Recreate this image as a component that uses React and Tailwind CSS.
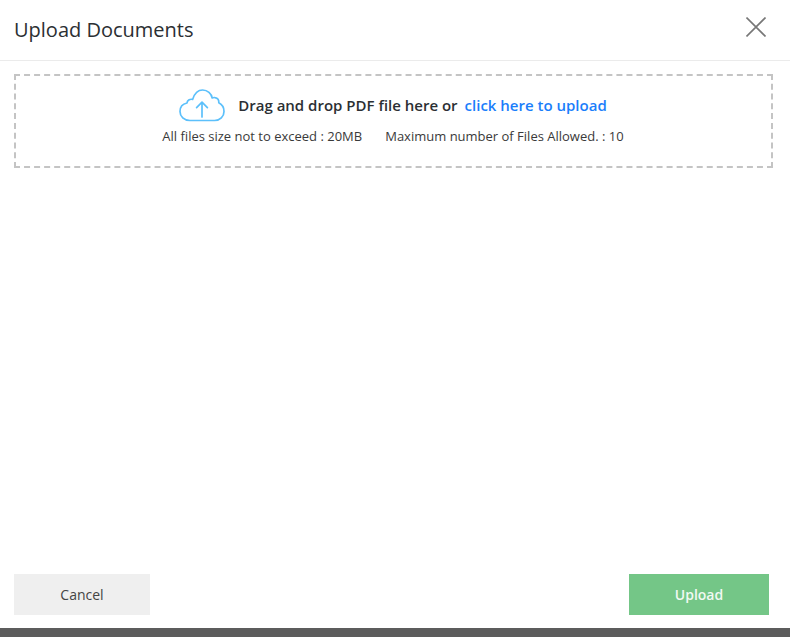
const font = "font-['Open_Sans',sans-serif]";

function CloudIcon() {
  return (
    <svg width="46" height="33" viewBox="0 0 46 33" fill="none" stroke="#5cc0fb" strokeWidth="1.7" strokeLinecap="round" strokeLinejoin="round">
      <path d="M11 31.5C5 31.5 1 27.5 1 22.5C1 18 4 14.8 8 14C8.2 11.5 10.6 9.8 13.6 10.4C15.4 4.8 19.2 1 23.6 1C28.6 1 32.4 4.6 33.2 9C34 8.6 35 8.4 36 8.6C38.6 9 40 11.2 39.8 13.8C43 15.4 45 18.6 45 22.4C45 27.6 41 31.5 35.6 31.5Z" />
      <path d="M23 28V13.5M17.6 18.6L23 13.2L28.4 18.6" />
    </svg>
  );
}

function CloseIcon() {
  return (
    <svg width="20" height="20" viewBox="0 0 20 20" fill="none" stroke="#777777" strokeWidth="1.6">
      <path d="M0.5 0.5L19.5 19.5M19.5 0.5L0.5 19.5" />
    </svg>
  );
}

export default function App() {
  return (
    <div className={`${font} flex h-[637px] w-[790px] flex-col overflow-hidden bg-white`}>
      {/* Header */}
      <div className="flex h-[61px] shrink-0 items-center justify-between border-b border-[#ebebeb] pl-[14px] pr-[24px]">
        <h1 className="text-[20px] font-medium text-[#2b2f33]">Upload Documents</h1>
        <button className="mb-[6px]">
          <CloseIcon />
        </button>
      </div>

      {/* Dropzone */}
      <div className="mx-[14px] mt-[13px] flex h-[94px] w-[759px] shrink-0 flex-col items-center border-2 border-dashed border-[#c4c4c4] pr-[1px] pt-[11px]">
        <div className="flex h-[36px] items-center">
          <CloudIcon />
          <span className="ml-[13px] text-[15px] font-semibold text-[#2b2f33]">Drag and drop PDF file here or</span>
          <span className="ml-[7px] text-[15px] font-semibold text-[#1a7efb]">click here to upload</span>
        </div>
        <div className="mt-[4px] flex text-[13px] text-[#3a3a3a]">
          <span>All files size not to exceed : 20MB</span>
          <span className="ml-[23px]">Maximum number of Files Allowed. : 10</span>
        </div>
      </div>

      {/* Footer */}
      <div className="mt-auto flex items-center justify-between pb-[13px] pl-[14px] pr-[21px]">
        <button className="h-[41px] w-[136px] bg-[#efefef] text-[14px] text-[#444444]">Cancel</button>
        <button className="h-[41px] w-[140px] bg-[#74c687] text-[14px] font-semibold text-[#f1f9f3]">Upload</button>
      </div>
      <div className="h-[9px] shrink-0 bg-[#5c5c5c]" />
    </div>
  );
}
